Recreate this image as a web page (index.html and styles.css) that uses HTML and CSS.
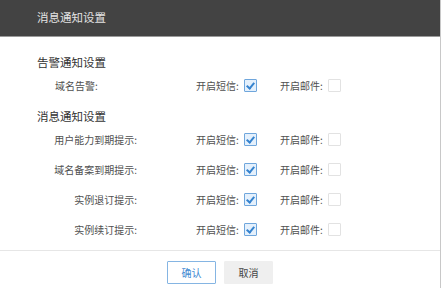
FILE: index.html
```html
<!DOCTYPE html>
<html lang="zh-CN">
<head>
  <meta charset="UTF-8" />
  <title>消息通知设置</title>
  <link rel="stylesheet" href="styles.css">
</head>
<body>

<div class="dialog">
  <div class="dialog-head">消息通知设置</div>

  <div class="dialog-body">
    <div class="group">
      <h3>告警通知设置</h3>
      <div class="row">
        <span class="label plain">域名告警:</span>
        <label class="opt">开启短信: <span class="check on"></span></label>
        <label class="opt">开启邮件: <span class="check"></span></label>
      </div>
    </div>

    <div class="group">
      <h3>消息通知设置</h3>
      <div class="row">
        <span class="label">用户能力到期提示:</span>
        <label class="opt">开启短信: <span class="check on"></span></label>
        <label class="opt">开启邮件: <span class="check"></span></label>
      </div>
      <div class="row">
        <span class="label">域名备案到期提示:</span>
        <label class="opt">开启短信: <span class="check on"></span></label>
        <label class="opt">开启邮件: <span class="check"></span></label>
      </div>
      <div class="row">
        <span class="label">实例退订提示:</span>
        <label class="opt">开启短信: <span class="check on"></span></label>
        <label class="opt">开启邮件: <span class="check"></span></label>
      </div>
      <div class="row">
        <span class="label">实例续订提示:</span>
        <label class="opt">开启短信: <span class="check on"></span></label>
        <label class="opt">开启邮件: <span class="check"></span></label>
      </div>
    </div>
  </div>

  <div class="dialog-foot">
    <button class="btn primary">确认</button>
    <button class="btn">取消</button>
  </div>
</div>

</body>
</html>
```

FILE: styles.css
```css
body {
  margin: 0;
  background: #fff;
  font-family: "Noto Sans CJK SC", "Noto Sans", sans-serif;
  color: #505050;
}

.dialog {
  width: 440px;
  height: 288px;
  border-right: 1px solid #c8c8c8;
  background: #fff;
}

.dialog-head {
  height: 36px;
  line-height: 34px;
  padding-left: 37px;
  background: #434343;
  border-bottom: 1px solid #9a9a9a;
  color: #e2e2e2;
  font-size: 11.5px;
}

.dialog-body {
  padding: 18px 0 11px;
}

.group h3 {
  margin: 0 0 6px 37px;
  height: 14px;
  line-height: 14px;
  font-size: 11.5px;
  font-weight: normal;
  color: #333;
}

.group + .group {
  margin-top: 14px;
}

.row {
  display: flex;
  align-items: center;
  height: 20px;
  font-size: 10px;
  white-space: nowrap;
}

.row + .row {
  margin-top: 10px;
}

.label {
  flex-shrink: 0;
  width: 84px;
  margin-left: 53px;
  margin-right: 59px;
  text-align: right;
}

.label.plain {
  padding-left: 2px;
  width: 82px;
  text-align: left;
}

.opt {
  display: flex;
  align-items: center;
  gap: 5px;
  width: 84px;
}

.check {
  width: 11px;
  height: 11px;
  border: 1px solid #e2e2e2;
  border-radius: 1px;
  background: #fff;
  position: relative;
}

.check.on {
  border-color: #6fa6dc;
  background: #e4f0fc;
}

.check.on::after {
  content: "";
  position: absolute;
  left: 3.5px;
  top: 1px;
  width: 3px;
  height: 6px;
  border: solid #3583cf;
  border-width: 0 2px 2px 0;
  transform: rotate(40deg);
}

.dialog-foot {
  display: flex;
  justify-content: center;
  gap: 8px;
  padding-top: 10px;
  border-top: 1px solid #e6e6e6;
}

.btn {
  width: 49px;
  height: 23px;
  padding: 0;
  border: 1px solid #efefef;
  border-radius: 1px;
  background: #efefef;
  color: #444;
  font-family: inherit;
  font-size: 10px;
}

.btn.primary {
  background: #fff;
  border-color: #85b5e3;
  color: #3f8ad2;
}
```
